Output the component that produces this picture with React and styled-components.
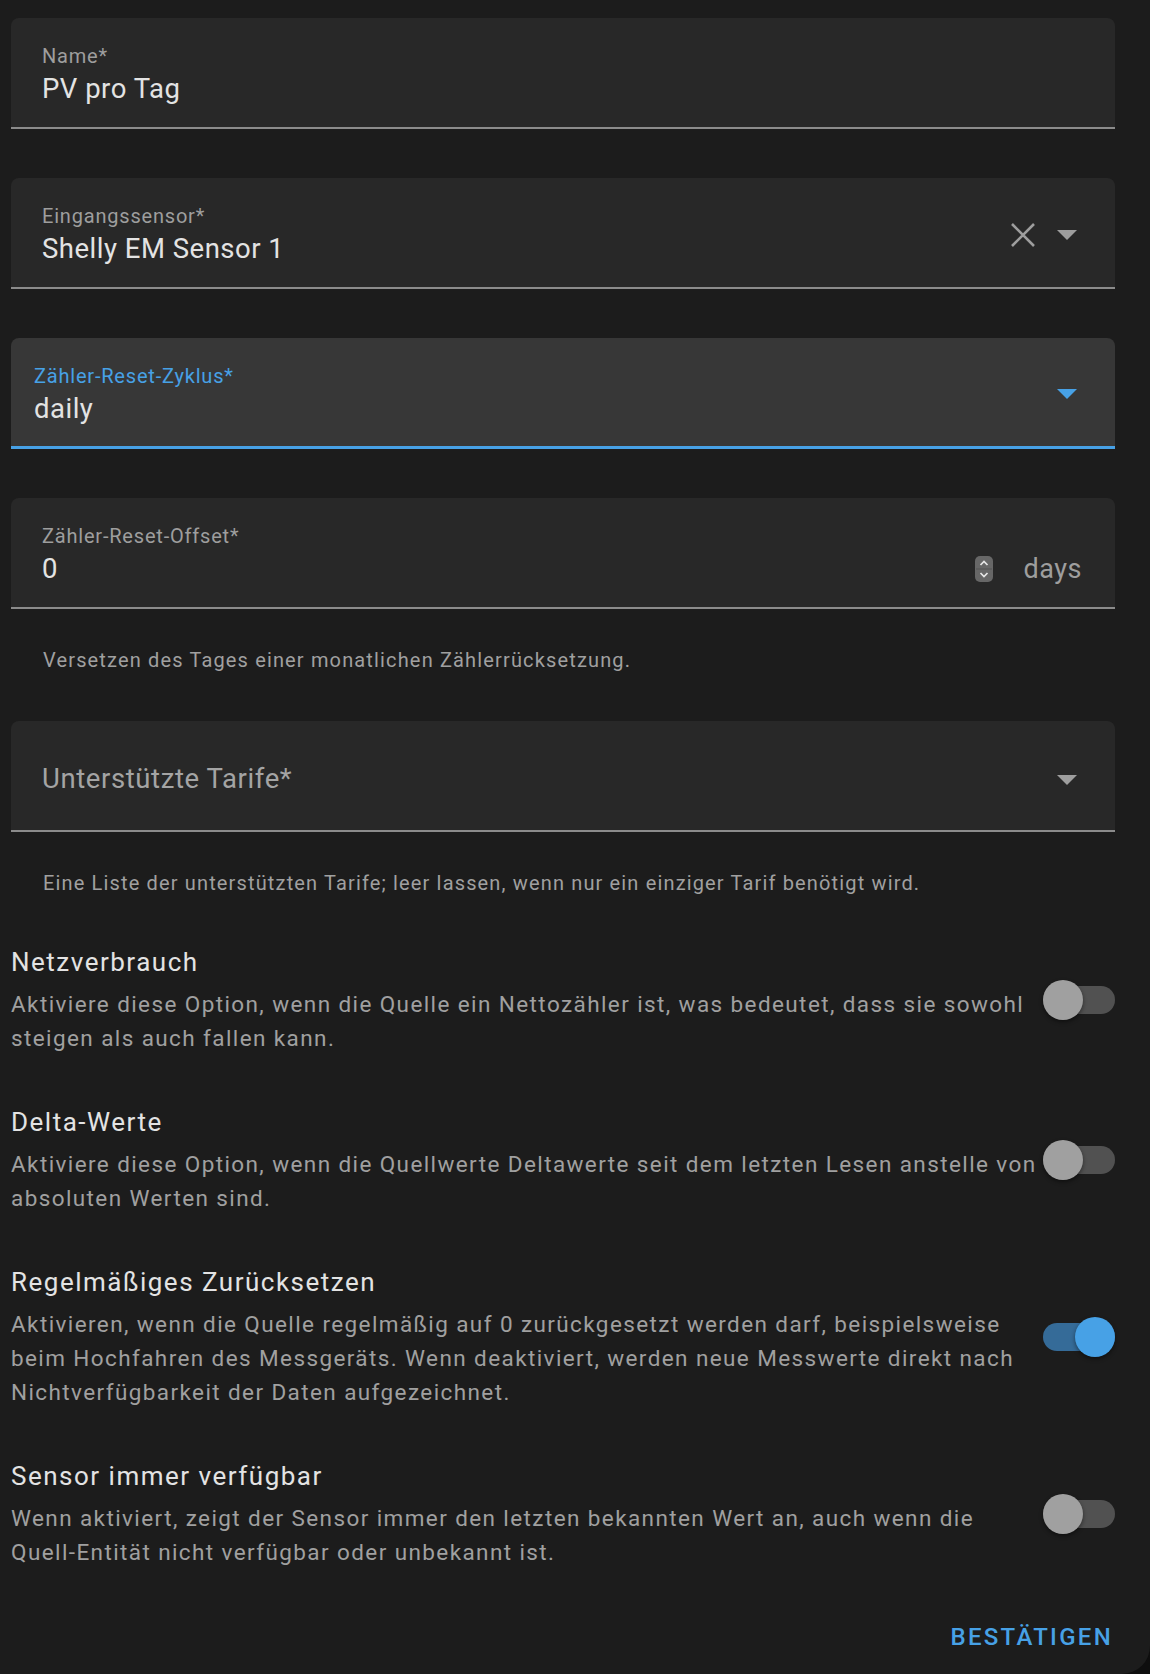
import React from 'react';
import styled, { createGlobalStyle } from 'styled-components';

const BLUE = '#47a1e6';

const GlobalStyle = createGlobalStyle`
	html, body {
		margin: 0;
		padding: 0;
		background: #0e0e0e;
	}
	body {
		font-family: Roboto, 'Liberation Sans', sans-serif;
		-webkit-font-smoothing: antialiased;
	}
`;

const Dialog = styled.div`
	width: 1150px;
	min-height: 1674px;
	box-sizing: border-box;
	background: #1c1c1c;
	border-bottom-right-radius: 28px;
	padding: 18px 35px 0 11px;
	display: flex;
	flex-direction: column;
	gap: 49px;
`;

const Group = styled.div`
	display: flex;
	flex-direction: column;
`;

const Field = styled.div`
	display: flex;
	align-items: stretch;
	height: 111px;
	box-sizing: border-box;
	background: ${(p) => (p.$focused ? '#373737' : '#282828')};
	border-radius: 8px 8px 0 0;
	border-bottom: ${(p) => (p.$focused ? `3px solid ${BLUE}` : '2px solid #8b8b8b')};
	padding: 0 33px 0 ${(p) => (p.$focused ? 23 : 31)}px;
`;

const FieldText = styled.div`
	flex: 1;
	display: flex;
	flex-direction: column;
	padding-top: 26px;
	min-width: 0;
`;

const Label = styled.div`
	font-size: 20px;
	line-height: 24px;
	letter-spacing: 0.8px;
	color: ${(p) => (p.$focused ? BLUE : '#9e9e9e')};
`;

const ValueRow = styled.div`
	display: flex;
	align-items: center;
	margin-top: 4px;
	height: 34px;
`;

const Value = styled.div`
	flex: 1;
	font-size: 27.5px;
	line-height: 34px;
	letter-spacing: 0.5px;
	color: #e3e3e3;
`;

const Placeholder = styled.div`
	flex: 1;
	align-self: center;
	margin-top: 6px;
	font-size: 27.5px;
	letter-spacing: 0.6px;
	color: #a4a4a4;
`;

const Trailing = styled.div`
	display: flex;
	align-items: center;
	align-self: center;
	margin-top: ${(p) => (p.$low ? 8 : 4)}px;
	gap: 22px;
	margin-right: 5px;
`;

const Suffix = styled.span`
	font-size: 27px;
	letter-spacing: 0.5px;
	color: #9e9e9e;
	margin-left: 31px;
`;

const Helper = styled.div`
	padding: 40px 0 1px 32px;
	font-size: 20px;
	line-height: 22px;
	letter-spacing: 1.15px;
	color: #a0a0a0;
`;

const Row = styled.div`
	display: flex;
	align-items: center;
`;

const RowText = styled.div`
	flex: 1;
	min-width: 0;
`;

const Title = styled.div`
	font-size: 26px;
	line-height: 36px;
	letter-spacing: 1.5px;
	color: #e3e3e3;
`;

const Desc = styled.div`
	margin-top: 7px;
	font-size: 22.5px;
	line-height: 34px;
	letter-spacing: 1.4px;
	color: #a0a0a0;
`;

const NoBreak = styled.span`
	white-space: nowrap;
`;

const Switch = styled.div`
	position: relative;
	flex-shrink: 0;
	width: 72px;
	height: 40px;
	margin-left: 6px;
`;

const Track = styled.div`
	position: absolute;
	left: 0;
	top: 6px;
	width: 72px;
	height: 28px;
	border-radius: 14px;
	background: ${(p) => (p.$on ? '#356b98' : '#515151')};
`;

const Knob = styled.div`
	position: absolute;
	top: 0;
	left: ${(p) => (p.$on ? '32px' : '0')};
	width: 40px;
	height: 40px;
	border-radius: 50%;
	background: ${(p) => (p.$on ? BLUE : '#a0a0a0')};
	box-shadow: 0 2px 4px rgba(0, 0, 0, 0.45);
`;

const Footer = styled.div`
	display: flex;
	justify-content: flex-end;
`;

const Button = styled.button`
	background: none;
	border: none;
	padding: 0;
	margin-right: 2px;
	font-family: inherit;
	font-size: 24px;
	line-height: 38px;
	font-weight: 500;
	letter-spacing: 2.3px;
	color: ${BLUE};
	cursor: pointer;
`;

function ClearIcon() {
	return (
		<svg width='24' height='24' viewBox='0 0 24 24'>
			<path d='M1 1 L23 23 M23 1 L1 23' stroke='#9e9e9e' strokeWidth='2.6' />
		</svg>
	);
}

function Arrow({ color = '#9e9e9e' }) {
	return (
		<svg width='20' height='10' viewBox='0 0 20 10'>
			<polygon points='0,0 20,0 10,10' fill={color} />
		</svg>
	);
}

function Spinner() {
	return (
		<svg width='18' height='26' viewBox='0 0 18 26'>
			<rect x='0' y='0' width='18' height='26' rx='5' fill='#676767' />
			<line x1='1' y1='13' x2='17' y2='13' stroke='#555' strokeWidth='1' />
			<path d='M5.5 9 L9 5.5 L12.5 9' stroke='#e6e6e6' strokeWidth='1.7' fill='none' />
			<path d='M5.5 17 L9 20.5 L12.5 17' stroke='#e6e6e6' strokeWidth='1.7' fill='none' />
		</svg>
	);
}

function Toggle({ on }) {
	return (
		<Switch>
			<Track $on={on} />
			<Knob $on={on} />
		</Switch>
	);
}

const options = [
	{
		title: 'Netzverbrauch',
		desc: 'Aktiviere diese Option, wenn die Quelle ein Nettozähler ist, was bedeutet, dass sie sowohl steigen als auch fallen kann.',
		on: false,
	},
	{
		title: 'Delta-Werte',
		desc: 'Aktiviere diese Option, wenn die Quellwerte Deltawerte seit dem letzten Lesen anstelle von absoluten Werten sind.',
		on: false,
	},
	{
		title: 'Regelmäßiges Zurücksetzen',
		desc: 'Aktivieren, wenn die Quelle regelmäßig auf 0 zurückgesetzt werden darf, beispielsweise beim Hochfahren des Messgeräts. Wenn deaktiviert, werden neue Messwerte direkt nach Nichtverfügbarkeit der Daten aufgezeichnet.',
		on: true,
	},
	{
		title: 'Sensor immer verfügbar',
		desc: (
			<>
				Wenn aktiviert, zeigt der Sensor immer den letzten bekannten Wert an, auch wenn die{' '}
				<NoBreak>Quell-Entität</NoBreak> nicht verfügbar oder unbekannt ist.
			</>
		),
		on: false,
	},
];

export default function App() {
	return (
		<>
			<GlobalStyle />
			<Dialog>
				<Field>
					<FieldText>
						<Label>Name*</Label>
						<ValueRow>
							<Value>PV pro Tag</Value>
						</ValueRow>
					</FieldText>
				</Field>

				<Field>
					<FieldText>
						<Label>Eingangssensor*</Label>
						<ValueRow>
							<Value>Shelly EM Sensor 1</Value>
						</ValueRow>
					</FieldText>
					<Trailing>
						<ClearIcon />
						<Arrow />
					</Trailing>
				</Field>

				<Field $focused>
					<FieldText>
						<Label $focused>Zähler-Reset-Zyklus*</Label>
						<ValueRow>
							<Value>daily</Value>
						</ValueRow>
					</FieldText>
					<Trailing>
						<Arrow color={BLUE} />
					</Trailing>
				</Field>

				<Group>
					<Field>
						<FieldText>
							<Label>Zähler-Reset-Offset*</Label>
							<ValueRow>
								<Value>0</Value>
								<Spinner />
								<Suffix>days</Suffix>
							</ValueRow>
						</FieldText>
					</Field>
					<Helper>Versetzen des Tages einer monatlichen Zählerrücksetzung.</Helper>
				</Group>

				<Group>
					<Field>
						<Placeholder>Unterstützte Tarife*</Placeholder>
						<Trailing $low>
							<Arrow />
						</Trailing>
					</Field>
					<Helper>
						Eine Liste der unterstützten Tarife; leer lassen, wenn nur ein einziger Tarif benötigt wird.
					</Helper>
				</Group>

				{options.map((o) => (
					<Row key={o.title}>
						<RowText>
							<Title>{o.title}</Title>
							<Desc>{o.desc}</Desc>
						</RowText>
						<Toggle on={o.on} />
					</Row>
				))}

				<Footer>
					<Button>BESTÄTIGEN</Button>
				</Footer>
			</Dialog>
		</>
	);
}
